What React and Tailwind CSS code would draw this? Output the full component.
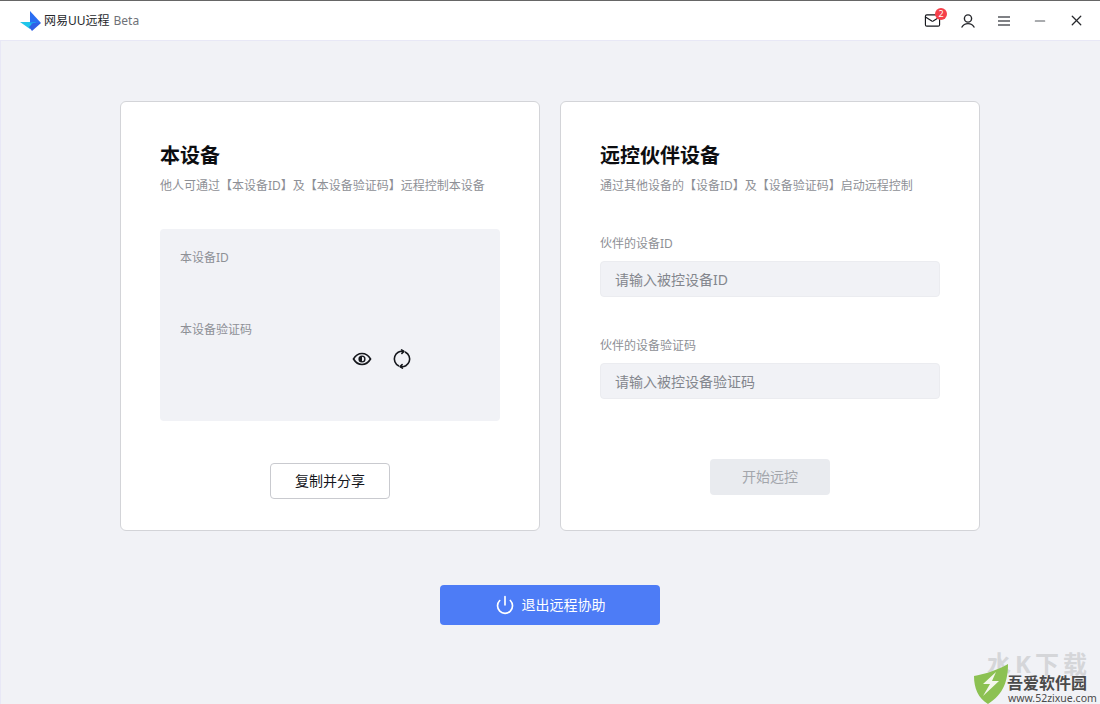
import { Mail, Minus, X, Power } from 'lucide-react'

const font = { fontFamily: '"Noto Sans", "Noto Sans CJK SC", sans-serif' }

function Logo() {
  return (
    <svg width="22" height="22" viewBox="0 0 22 22">
      <path d="M1 12 L17 12 L11 19 Z" fill="#20c6ea" />
      <path d="M11 1 L22 13 L11 13 Z" fill="#2a6df2" />
      <path d="M11 12 L17 12 L13 17 Z" fill="#1f9bf0" />
      <path d="M22 13 L13 21 L10 17 L14 13 Z" fill="#2f5fe6" />
    </svg>
  )
}

function UserIcon() {
  return (
    <svg width="16" height="16" viewBox="0 0 16 16" fill="none" stroke="#26282c" strokeWidth="1.4" strokeLinecap="round">
      <circle cx="8" cy="5.5" r="3.6" />
      <path d="M2 14 C3.2 11.6 5.2 10.6 8 10.6 C10.8 10.6 12.8 11.6 14 14" />
    </svg>
  )
}

function BarsIcon() {
  return (
    <svg width="14" height="12" viewBox="0 0 14 12" stroke="#55585e" strokeWidth="1.6">
      <path d="M1 2 H13 M1 6 H13 M1 10 H13" />
    </svg>
  )
}

function Watermark() {
  return (
    <div className="absolute right-0 bottom-0 w-[130px] h-[60px] pointer-events-none">
      <div className="absolute left-[17px] top-[9px] text-[24px] leading-[22px] font-bold tracking-[4px] text-[#d5d6d9] whitespace-nowrap">
        水K下载
      </div>
      <svg className="absolute left-[2px] top-[20px]" width="38" height="40" viewBox="0 0 38 40">
        <path d="M2 12 C12 10 24 7 36 0 C36 16 32 30 16 40 C6 34 2 24 2 12 Z" fill="#8cc152" />
        <path d="M24 8 L11 20 L18 20 L11 32 L27 17 L20 17 Z" fill="#f4f7ec" />
      </svg>
      <div className="absolute left-[37px] top-[31px] text-[16px] leading-[17px] font-bold text-[#4a4a4a] whitespace-nowrap">
        吾爱软件园
      </div>
      <div className="absolute left-[38px] top-[48px] text-[10.5px] leading-[12px] text-[#4a4a4a] whitespace-nowrap">
        www.52zixue.com
      </div>
    </div>
  )
}

function Field({ label, placeholder, className }) {
  return (
    <div className={className}>
      <div className="text-xs leading-[18px] text-[#8e9096]">{label}</div>
      <input
        placeholder={placeholder}
        className="mt-[8px] w-full h-9 px-[14px] bg-[#f1f2f6] border border-[#ebecf0] rounded text-sm outline-none placeholder:text-[#83868d]"
      />
    </div>
  )
}

export default function App() {
  return (
    <div style={font} className="relative w-[1100px] h-[704px] overflow-hidden bg-[#f1f2f6] flex flex-col">
      <header className="h-[41px] shrink-0 bg-white border-t border-t-[#666666] border-b border-b-[#e8e8f6] flex items-center pl-[19px]">
        <Logo />
        <span className="ml-[3px] text-xs text-[#26282c]">网易UU远程</span>
        <span className="ml-[4px] text-xs text-[#6f7278]">Beta</span>
        <div className="ml-auto flex items-center">
          <div className="relative w-9 flex justify-center">
            <Mail size={17} strokeWidth={1.6} className="text-[#15171c]" />
            <span className="absolute left-[21px] -top-[4px] w-[12px] h-[12px] rounded-full bg-[#f5404a] text-white text-[9px] leading-[12px] text-center">2</span>
          </div>
          <div className="w-9 flex justify-center"><UserIcon /></div>
          <div className="w-9 flex justify-center"><BarsIcon /></div>
          <div className="w-9 flex justify-center"><Minus size={16} strokeWidth={1.8} className="text-[#55585e]" /></div>
          <div className="w-9 flex justify-center mr-[6px]"><X size={17} strokeWidth={1.8} className="text-[#26282c]" /></div>
        </div>
      </header>

      <main className="flex-1 flex flex-col items-center pt-[60px] border-l border-l-[#e8e8f6] pr-px">
        <div className="flex gap-5">
          <section className="w-[420px] h-[430px] bg-white border border-[#d3d4d8] rounded-md px-[39px] pt-[39px] flex flex-col">
            <h2 className="text-xl leading-[30px] font-bold text-[#0c0d10]">本设备</h2>
            <p className="mt-[6px] text-xs leading-[18px] text-[#8e9096] whitespace-nowrap">他人可通过【本设备ID】及【本设备验证码】远程控制本设备</p>
            <div className="mt-[34px] h-[192px] bg-[#f1f2f6] rounded px-5 pt-[20px] flex flex-col">
              <div className="text-xs leading-[18px] text-[#8e9096]">本设备ID</div>
              <div className="mt-[54px] text-xs leading-[18px] text-[#8e9096]">本设备验证码</div>
              <div className="mt-[10px] ml-[172px] flex items-center gap-[20px]">
                <svg width="20" height="20" viewBox="0 0 20 20" fill="none">
                  <path d="M1.5 10 C4 5.8 6.8 4.5 10 4.5 C13.2 4.5 16 5.8 18.5 10 C16 14.2 13.2 15.5 10 15.5 C6.8 15.5 4 14.2 1.5 10 Z" stroke="#15171c" strokeWidth="1.7" />
                  <circle cx="10" cy="10" r="3.6" fill="#15171c" />
                  <path d="M10 7.8 A2.2 2.2 0 0 1 10 12.2 Z" fill="#f1f2f6" />
                </svg>
                <svg width="20" height="20" viewBox="0 0 20 20" fill="none" stroke="#15171c" strokeWidth="1.6" strokeLinecap="round" strokeLinejoin="round">
                  <path d="M6.5 16.8 A7.7 7.7 0 0 1 11.5 2.4" />
                  <path d="M13.5 3.2 A7.7 7.7 0 0 1 8.5 17.6" />
                  <path d="M9.6 0.9 L11.8 2.4 L9.9 4.4" />
                  <path d="M10.4 19.1 L8.2 17.6 L10.1 15.6" />
                </svg>
              </div>
            </div>
            <button className="mt-[42px] self-center w-[120px] h-9 bg-white border border-[#c9cacf] rounded text-sm text-[#15171c]">复制并分享</button>
          </section>

          <section className="w-[420px] h-[430px] bg-white border border-[#d3d4d8] rounded-md px-[39px] pt-[39px] flex flex-col">
            <h2 className="text-xl leading-[30px] font-bold text-[#0c0d10]">远控伙伴设备</h2>
            <p className="mt-[6px] text-xs leading-[18px] text-[#8e9096] whitespace-nowrap">通过其他设备的【设备ID】及【设备验证码】启动远程控制</p>
            <Field className="mt-[40px]" label="伙伴的设备ID" placeholder="请输入被控设备ID" />
            <Field className="mt-[40px]" label="伙伴的设备验证码" placeholder="请输入被控设备验证码" />
            <button className="mt-[60px] self-center w-[120px] h-9 bg-[#e9ebef] rounded text-sm text-[#a3a6ac]">开始远控</button>
          </section>
        </div>

        <button className="mt-[54px] w-[220px] h-10 bg-[#4d7cf6] rounded text-white text-sm flex items-center justify-center gap-[7px]">
          <Power size={20} strokeWidth={2} />
          退出远程协助
        </button>
      </main>

      <Watermark />
    </div>
  )
}
